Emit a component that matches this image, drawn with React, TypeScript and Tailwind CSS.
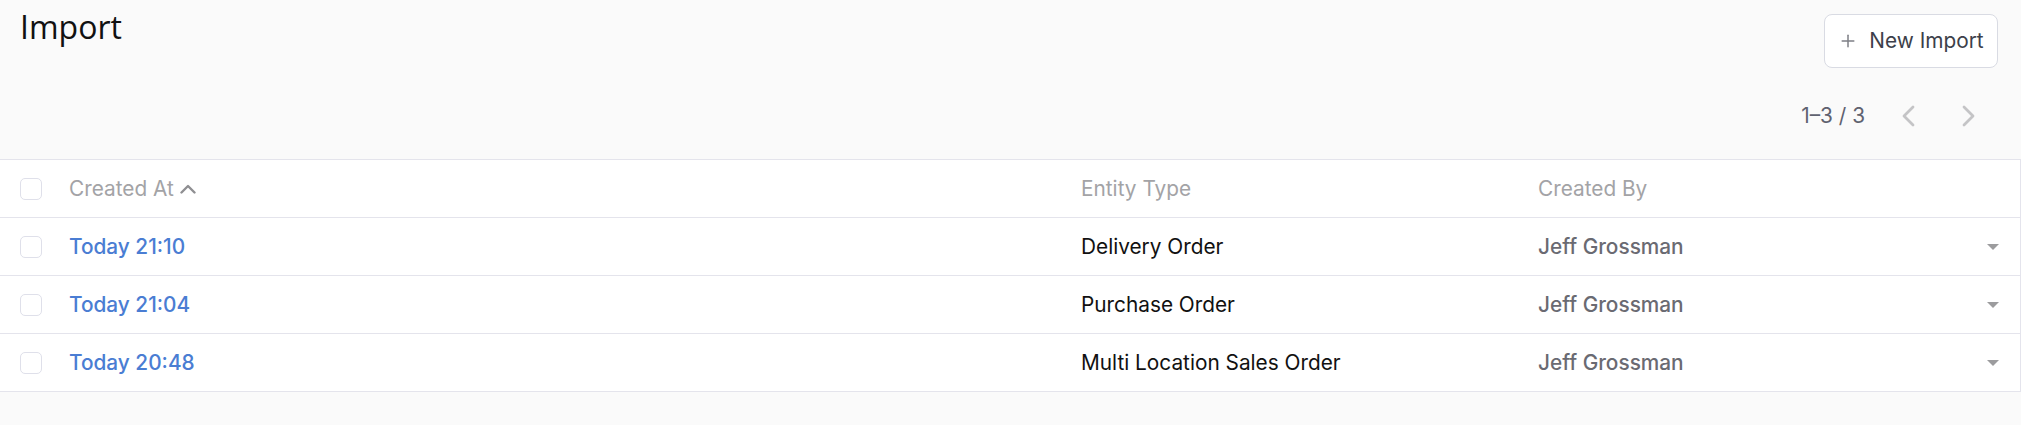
import { Plus } from 'lucide-react'

interface ImportRow {
  createdAt: string
  entityType: string
  createdBy: string
}

const rows: ImportRow[] = [
  { createdAt: 'Today 21:10', entityType: 'Delivery Order', createdBy: 'Jeff Grossman' },
  { createdAt: 'Today 21:04', entityType: 'Purchase Order', createdBy: 'Jeff Grossman' },
  { createdAt: 'Today 20:48', entityType: 'Multi Location Sales Order', createdBy: 'Jeff Grossman' },
]

function Checkbox() {
  return <div className="w-[22px] h-[22px] rounded-[5px] border border-[#dfe0ea] bg-white shrink-0" />
}

function Chevron({ dir }: { dir: 'left' | 'right' }) {
  return (
    <svg width="14" height="22" viewBox="0 0 14 22" fill="none" className="text-[#c4c4c6]">
      <polyline
        points={dir === 'left' ? '12,2 3,11 12,20' : '2,2 11,11 2,20'}
        stroke="currentColor"
        strokeWidth="2.8"
        strokeLinecap="round"
        strokeLinejoin="round"
      />
    </svg>
  )
}

export default function App() {
  return (
    <div className="w-full h-[425px] bg-[#fafafa] font-['Inter',sans-serif] overflow-hidden">
      {/* ── Header ── */}
      <div className="h-[159px] flex flex-col">
        <div className="flex items-start justify-between">
          <h1 className="pl-[20px] pt-[8px] text-[32px] leading-[38px] text-[#111] font-['Open_Sans',sans-serif]">
            Import
          </h1>
          <button className="mt-[14px] mr-[23px] h-[54px] w-[174px] flex items-center justify-center gap-[11px] rounded-[8px] border border-[#d9dbe3] bg-white text-[20.8px] text-[#3d3f4a]">
            <Plus className="w-[20px] h-[20px] text-[#7e7f86]" strokeWidth={1.8} />
            New Import
          </button>
        </div>
        <div className="mt-[33px] flex items-center justify-end pr-[45px]">
          <span className="text-[20.8px] leading-[30px] text-[#5f6270] mr-[36px]">1–3 / 3</span>
          <Chevron dir="left" />
          <span className="w-[47px]" />
          <Chevron dir="right" />
        </div>
      </div>

      {/* ── Table ── */}
      <div className="bg-white border-t border-r border-[#e4e4ec]">
        <div className="h-[58px] flex items-center border-b border-[#e4e4ec] text-[20.8px] text-[#a3a3a6]">
          <div className="w-[69px] pl-[20px]">
            <Checkbox />
          </div>
          <div className="w-[1012px] flex items-center">
            Created At
            <svg width="16" height="10" viewBox="0 0 16 10" fill="none" className="ml-[6px] text-[#8f8f92]">
              <polyline points="1.5,8.5 8,2 14.5,8.5" stroke="currentColor" strokeWidth="2.4" strokeLinecap="round" strokeLinejoin="round" />
            </svg>
          </div>
          <div className="w-[457px]">Entity Type</div>
          <div className="flex-1">Created By</div>
        </div>
        {rows.map((row, i) => (
          <div key={i} className="h-[58px] flex items-center border-b border-[#e4e4ec] text-[20.8px]">
            <div className="w-[69px] pl-[20px]">
              <Checkbox />
            </div>
            <div className="w-[1012px] text-[#4a7dd3] font-medium">{row.createdAt}</div>
            <div className="w-[457px] text-[#111]">{row.entityType}</div>
            <div className="flex-1 text-[#6a6a72] font-medium">{row.createdBy}</div>
            <div className="w-[12px] mr-[21px] h-0 border-l-[6px] border-r-[6px] border-t-[6px] border-l-transparent border-r-transparent border-t-[#9c9c9e]" />
          </div>
        ))}
      </div>
    </div>
  )
}
